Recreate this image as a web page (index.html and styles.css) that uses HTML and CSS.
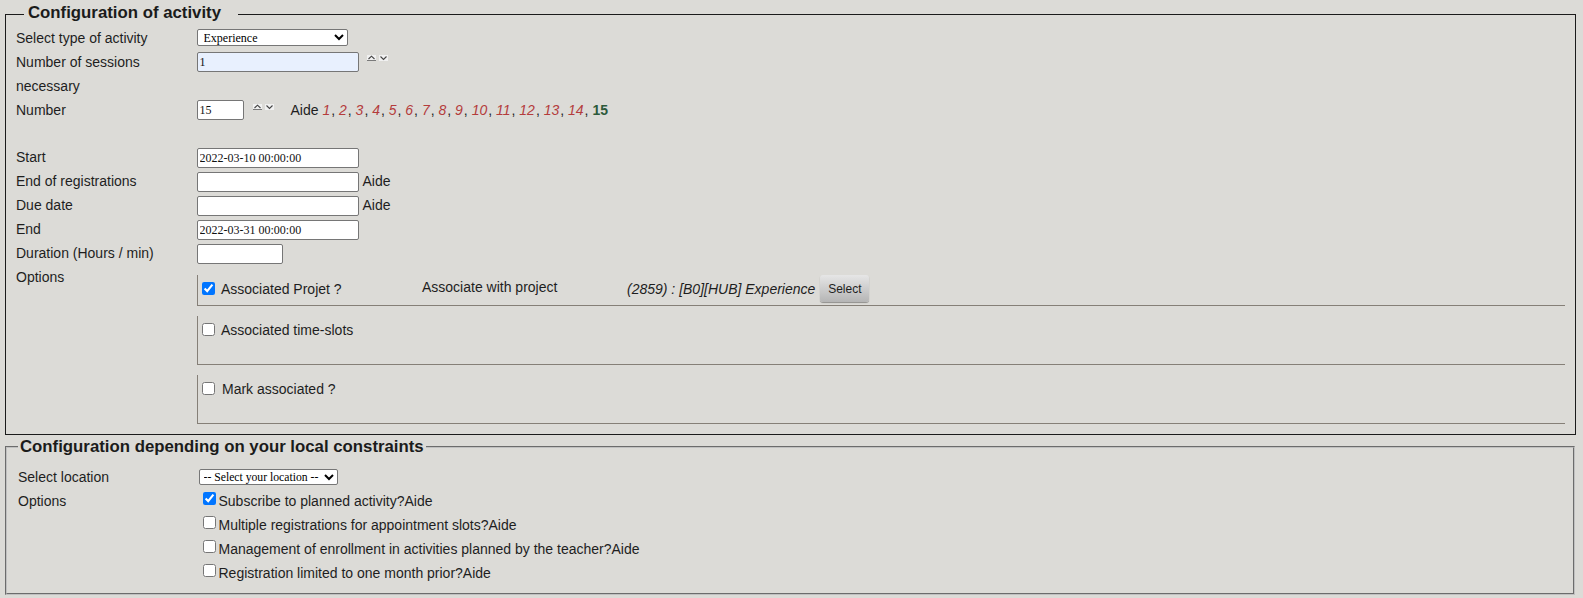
FILE: index.html
```html
<!DOCTYPE html>
<html>
<head>
<meta charset="utf-8">
<title>Configuration of activity</title>
<link rel="stylesheet" href="styles.css">
</head>
<body>
<div class="page">
  <fieldset class="fs fs1">
    <legend class="lg lg1">Configuration of activity</legend>
    <div class="form">
      <div class="lbl">Select type of activity</div>
      <div class="val"><select class="sel sel-type"><option>Experience</option></select></div>

      <div class="lbl">Number of sessions necessary</div>
      <div class="val">
        <input class="in in-wide in-auto r2" value="1">
        <span class="spin s1">
          <svg width="9" height="6" viewBox="0 0 9 6"><rect width="9" height="5" fill="#f1f1f1"/><path d="M1.5 4 L4.5 1.2 L7.5 4" fill="none" stroke="#444" stroke-width="1.1"/><path d="M0 5.5 H9" stroke="#7a7a7a" stroke-width="1"/></svg>
          <svg width="9" height="6" viewBox="0 0 9 6"><rect width="9" height="6" fill="#f1f1f1"/><path d="M1.5 1.5 L4.5 4.5 L7.5 1.5" fill="none" stroke="#444" stroke-width="1.1"/></svg>
        </span>
      </div>

      <div class="lbl">Number</div>
      <div class="val">
        <input class="in in-num r2" value="15">
        <span class="spin s2">
          <svg width="9" height="6" viewBox="0 0 9 6"><rect width="9" height="5" fill="#f1f1f1"/><path d="M1.5 4 L4.5 1.2 L7.5 4" fill="none" stroke="#444" stroke-width="1.1"/><path d="M0 5.5 H9" stroke="#7a7a7a" stroke-width="1"/></svg>
          <svg width="9" height="6" viewBox="0 0 9 6"><rect width="9" height="6" fill="#f1f1f1"/><path d="M1.5 1.5 L4.5 4.5 L7.5 1.5" fill="none" stroke="#444" stroke-width="1.1"/></svg>
        </span>
        <span class="aide-list">Aide <i class="n">1</i>, <i class="n">2</i>, <i class="n">3</i>, <i class="n">4</i>, <i class="n">5</i>, <i class="n">6</i>, <i class="n">7</i>, <i class="n">8</i>, <i class="n">9</i>, <i class="n">10</i>, <i class="n">11</i>, <i class="n">12</i>, <i class="n">13</i>, <i class="n">14</i>, <b class="cur">15</b></span>
      </div>

      <div class="blank"></div>

      <div class="lbl">Start</div>
      <div class="val"><input class="in in-wide" value="2022-03-10 00:00:00"></div>

      <div class="lbl">End of registrations</div>
      <div class="val"><input class="in in-wide" value=""><span class="txt aide">Aide</span></div>

      <div class="lbl">Due date</div>
      <div class="val"><input class="in in-wide" value=""><span class="txt aide">Aide</span></div>

      <div class="lbl">End</div>
      <div class="val"><input class="in in-wide" value="2022-03-31 00:00:00"></div>

      <div class="lbl">Duration (Hours / min)</div>
      <div class="val"><input class="in in-dur" value=""></div>

      <div class="lbl">Options</div>
      <div class="val boxes">
        <div class="box box1">
          <label class="bchk c1"><input type="checkbox" checked><span class="btxt">Associated Projet ?</span></label>
          <span class="assoc">Associate with project</span>
          <span class="proj">(2859) : [B0][HUB] Experience</span>
          <button class="btn-select" type="button">Select</button>
        </div>
        <div class="box box2">
          <label class="bchk"><input type="checkbox"><span class="btxt">Associated time-slots</span></label>
        </div>
        <div class="box box3">
          <label class="bchk"><input type="checkbox"><span class="btxt mark">Mark associated ?</span></label>
        </div>
      </div>
    </div>
  </fieldset>

  <fieldset class="fs fs2">
    <legend class="lg lg2">Configuration depending on your local constraints</legend>
    <div class="form">
      <div class="lbl">Select location</div>
      <div class="val"><select class="sel sel-loc"><option>-- Select your location --</option></select></div>

      <div class="lbl">Options</div>
      <div class="val chklist">
        <label class="chk"><input type="checkbox" checked><span>Subscribe to planned activity?Aide</span></label>
        <label class="chk"><input type="checkbox"><span>Multiple registrations for appointment slots?Aide</span></label>
        <label class="chk"><input type="checkbox"><span>Management of enrollment in activities planned by the teacher?Aide</span></label>
        <label class="chk"><input type="checkbox"><span>Registration limited to one month prior?Aide</span></label>
      </div>
    </div>
  </fieldset>
</div>
</body>
</html>
```

FILE: styles.css
```css
html, body {
  margin: 0;
  padding: 0;
  background: #dcdbd7;
}

body {
  font-family: "Liberation Sans", Arial, sans-serif;
  font-size: 14px;
  color: #1e1e1e;
}

.page {
  padding: 3px 7px 0 5px;
}

.fs {
  margin: 0;
  min-width: 0;
}

.fs1 {
  border: 1px solid #1b1b1b;
  padding: 0 10px 10px 10px;
}

.fs2 {
  margin: 1.5px 1px 0 0;
  border: 2px groove #c0c0c0;
  padding: 8px 10px 8px 11px;
}

.lg {
  font-family: "Liberation Sans", Arial, sans-serif;
  font-weight: bold;
  font-size: 16.8px;
  line-height: 19px;
  color: #1b1b1b;
}

.lg1 {
  margin-left: 8px;
  padding: 0 17px 4px 4px;
}

.lg2 {
  padding: 0 2px 1px 2px;
}

.form {
  display: grid;
  grid-template-columns: 180.5px 1fr;
}

.lbl {
  line-height: 24px;
}

.val {
  display: flex;
  align-items: flex-start;
  line-height: 24px;
  min-height: 24px;
}

.blank {
  grid-column: 1 / 3;
  height: 23px;
}

.in {
  box-sizing: border-box;
  height: 20px;
  margin: 3.4px 0 0 0;
  padding: 0 2px;
  border: 1px solid #767676;
  border-radius: 2px;
  background: #ffffff;
  font-family: "Liberation Serif", "Times New Roman", serif;
  font-size: 12px;
  color: #111;
  outline: none;
}

.in.r2 {
  margin-top: 2px;
}

.in-wide { width: 162px; }
.in-num { width: 47px; }
.in-dur { width: 86.5px; }
.in-auto { background: #e8f0fe; }

.sel {
  box-sizing: border-box;
  margin: 3.3px 0 0 0;
  height: 17px;
  padding: 0 0 0 2px;
  border: 1px solid #767676;
  border-radius: 2px;
  background-color: #ffffff;
  font-family: "Liberation Serif", "Times New Roman", serif;
  font-size: 12px;
  color: #000;
}

.sel-type { width: 151.5px; }
.sel-loc { width: 139px; height: 16px; margin-top: 4.5px; padding-left: 0; font-size: 11.7px; }

.spin {
  display: flex;
  gap: 3px;
  margin-top: 5.3px;
}

.spin svg { display: block; }

.s1 { margin-left: 8.7px; }
.s2 { margin-left: 9px; margin-top: 5.7px; }

.aide-list {
  margin-left: 17px;
  white-space: nowrap;
}

.aide-list .n {
  color: #b43c3c;
  margin-right: 1px;
}

.aide-list .cur {
  color: #2d5a3b;
}

.aide {
  margin-left: 4px;
}

.boxes {
  flex-direction: column;
  align-items: stretch;
}

.box {
  display: flex;
  align-items: flex-start;
  margin-top: 10px;
  border-left: 1px solid #857f77;
  border-bottom: 1px solid #857f77;
  line-height: 16px;
}

.box1 { height: 30px; }
.box2, .box3 { height: 48px; }

.bchk {
  display: flex;
  align-items: flex-start;
}

.bchk input {
  margin: 7px 0 0 4px;
  width: 13px;
  height: 13px;
}

.btxt {
  margin: 6px 0 0 6.5px;
}

.btxt.mark { margin-left: 7.5px; }

.c1 { width: 224.5px; }

.assoc {
  width: 205px;
  margin-top: 4px;
}

.proj {
  font-style: italic;
  margin-top: 5.5px;
}

.btn-select {
  margin: 0 0 0 5px;
  height: 27px;
  width: 49px;
  padding: 0;
  border: 0;
  border-radius: 3px;
  background: linear-gradient(#e6e6e6, #b5b5b5);
  box-shadow: 0 1px 1px rgba(0, 0, 0, 0.35);
  font-family: "Liberation Sans", Arial, sans-serif;
  font-size: 12px;
  color: #1e1e1e;
}

.chklist {
  flex-direction: column;
}

.chk {
  display: flex;
  align-items: flex-start;
  line-height: 24px;
}

.chk input {
  margin: 3.3px 3px 0 4px;
  width: 13px;
  height: 13px;
}
```
